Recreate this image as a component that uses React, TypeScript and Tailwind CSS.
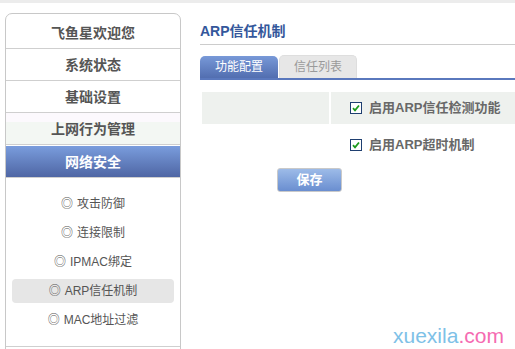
import React from "react";

const menu = ["飞鱼星欢迎您", "系统状态", "基础设置"];
const subMenu = ["攻击防御", "连接限制", "IPMAC绑定", "ARP信任机制", "MAC地址过滤"];

const CheckBox = () => (
	<span className="flex items-center justify-center w-[12px] h-[12px] border border-[#1f3f70] bg-white">
		<svg width="8" height="8" viewBox="0 0 8 8">
			<path d="M1 4.2 L3 6.3 L7 1.5" stroke="#1c9a1c" strokeWidth="1.8" fill="none" />
		</svg>
	</span>
);

const App = () => {
	return (
		<div className="relative w-[515px] h-[349px] overflow-hidden bg-white font-['Liberation_Sans','Noto_Sans_CJK_SC',sans-serif]">
			<div className="h-[3px] bg-[#ececec]" />
			<div className="flex flex-row">
				{/* sidebar */}
				<div className="ml-[5px] mt-[10px] w-[176px] h-[400px] border border-[#c8c8c8] rounded-t-[7px] flex flex-col">
					{menu.map((m, i) => (
						<div
							key={m}
							className={`flex items-center justify-center border-b border-[#cfcfcf] text-[14px] font-bold text-[#555] ${
								i === 0 ? "h-[35px] pt-[5px]" : "h-[32px] pt-[2px]"
							}`}>
							{m}
						</div>
					))}
					<div className="flex items-center justify-center h-[32px] pt-[2px] border-b border-[#cfcfcf] text-[14px] font-bold text-[#555] bg-[linear-gradient(#fcf9fd_0,#fcf9fd_30%,#f3f7f3_30%)]">
						上网行为管理
					</div>
					<div className="flex items-center justify-center h-[32px] mt-[1px] pt-[1px] border-b border-[#cfcfcf] text-[14px] font-bold text-white bg-gradient-to-b from-[#7a9ddd] to-[#4f66a4]">
						网络安全
					</div>
					<div className="flex flex-col gap-[5px] pt-[14px] pb-[14px] px-[6px] border-b border-[#cfcfcf]">
						{subMenu.map((s) => (
							<div
								key={s}
								className={`flex items-center justify-center h-[24px] rounded-[4px] text-[12px] text-[#555] ${
									s === "ARP信任机制" ? "bg-[#e6e6e6]" : ""
								}`}>
								<span className="mr-[4px]">◎</span>
								{s}
							</div>
						))}
					</div>
				</div>

				{/* content */}
				<div className="ml-[19px] flex-1 flex flex-col">
					<div className="pt-[18px] pb-[3px] leading-[20px] border-b border-[#cccccc] text-[14px] font-bold text-[#34579b]">
						ARP信任机制
					</div>
					<div className="mt-[10px] flex flex-row items-end gap-[1px] border-b-2 border-[#5a78bd]">
						<div className="w-[78px] h-[22px] rounded-t-[5px] bg-gradient-to-b from-[#7899d8] to-[#526eb0] text-white text-[12px] flex items-center justify-center">
							功能配置
						</div>
						<div className="w-[78px] h-[23px] rounded-t-[5px] bg-[#e7e7e7] border border-b-0 border-[#dedede] text-[#9a9a9a] text-[12px] flex items-center justify-center">
							信任列表
						</div>
					</div>
					<div className="mt-[12px] ml-[2px] flex flex-row gap-[2px] h-[32px]">
						<div className="w-[127px] bg-[#eef1ee]" />
						<div className="flex-1 bg-[#eef1ee] flex items-center pl-[19px] gap-[7px]">
							<CheckBox />
							<span className="text-[13px] font-bold text-[#686868]">启用ARP信任检测功能</span>
						</div>
					</div>
					<div className="mt-[5px] ml-[150px] h-[32px] flex items-center gap-[7px]">
						<CheckBox />
						<span className="text-[13px] font-bold text-[#686868]">启用ARP超时机制</span>
					</div>
					<button className="mt-[7px] ml-[77px] w-[65px] h-[24px] rounded-[3px] border border-[#c9c9c9] bg-gradient-to-b from-[#9dbbe8] to-[#6a8ed0] text-white text-[13px] font-bold flex items-center justify-center">
						保存
					</button>
				</div>
			</div>

			{/* watermark */}
			<div className="absolute left-[393px] top-[324px] text-[21px] leading-[24px] font-['Liberation_Sans',sans-serif]">
				<span className="text-[#7ec1e7]">xuexila</span>
				<span className="text-[#f56bb1]">.com</span>
			</div>
		</div>
	);
};

export default App;
